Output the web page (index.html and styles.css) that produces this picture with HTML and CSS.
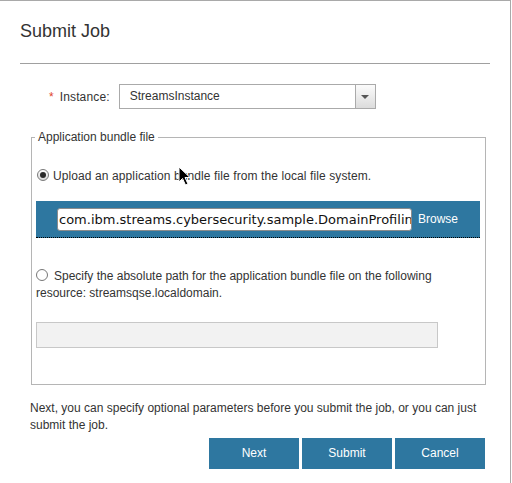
FILE: index.html
```html
<!DOCTYPE html>
<html>
<head>
<meta charset="utf-8">
<link rel="stylesheet" href="styles.css">
</head>
<body>
<div class="dialog">
  <div class="header"><h1 class="title">Submit Job</h1></div>
  <div class="instance-row">
    <span class="req">*</span>
    <span class="lbl">Instance:</span>
    <div class="select">
      <span class="select-text">StreamsInstance</span>
      <span class="select-btn"><span class="tri"></span></span>
    </div>
  </div>
  <fieldset class="bundle">
    <legend>Application bundle file</legend>
    <div class="opt1"><span class="radio checked"></span><span class="opt1-text">Upload an application bundle file from the local file system.</span></div>
    <div class="band">
      <input class="file-input" type="text" readonly value="com.ibm.streams.cybersecurity.sample.DomainProfiling.sab">
      <span class="browse">Browse</span>
    </div>
    <p class="opt2"><span class="radio"></span>Specify the absolute path for the application bundle file on the following resource: streamsqse.localdomain.</p>
    <div class="pathbox"></div>
  </fieldset>
  <p class="note">Next, you can specify optional parameters before you submit the job, or you can just submit the job.</p>
  <div class="buttons">
    <div class="btn">Next</div>
    <div class="btn">Submit</div>
    <div class="btn">Cancel</div>
  </div>
</div>
<svg class="cursor" width="14" height="21" viewBox="0 0 14 21"><path d="M1 1 L1 16 L4.5 12.5 L7.5 19 L10 18 L7 11.5 L12 11.5 Z" fill="#000" stroke="#fff" stroke-width="1"/></svg>
</body>
</html>
```
FILE: styles.css
```css
html, body {
  margin: 0;
  padding: 0;
  background: #fff;
  overflow: hidden;
}
body {
  font-family: "Liberation Sans", Arial, sans-serif;
  font-size: 12px;
  color: #333;
  position: relative;
  width: 512px;
  height: 483px;
}
.dialog {
  width: 510px;
  height: 520px;
  border-top: 1px solid #a9a9a9;
  border-right: 1px solid #a9a9a9;
}
.header {
  margin: 0 20px;
  padding: 19px 0 21px;
  border-bottom: 1px solid #a0a0a0;
}
.title {
  margin: 0;
  font-size: 18px;
  line-height: 22px;
  font-weight: normal;
  color: #333;
}
.instance-row {
  display: flex;
  align-items: center;
  margin: 20px 0 0 49px;
  height: 25px;
}
.req {
  color: #e0442a;
  font-size: 12px;
  line-height: 12px;
  align-self: flex-start;
  margin-top: 7px;
  margin-right: 6px;
}
.lbl {
  margin-right: 9px;
  line-height: 14px;
  letter-spacing: 0.15px;
}
.select {
  box-sizing: border-box;
  width: 257px;
  height: 25px;
  border: 1px solid #aaa;
  display: flex;
  background: #fff;
}
.select-text {
  flex: 1;
  padding-left: 10px;
  line-height: 23px;
}
.select-btn {
  width: 19px;
  border-left: 1px solid #aaa;
  background: linear-gradient(#fbfbfb, #dcdcdc);
  display: flex;
  align-items: center;
  justify-content: center;
}
.tri {
  width: 0;
  height: 0;
  border-left: 4px solid transparent;
  border-right: 4px solid transparent;
  border-top: 4px solid #555;
}
.bundle {
  box-sizing: border-box;
  width: 455px;
  margin: 21px 0 0 31px;
  padding: 0 5px 36px 4px;
  border: 1px solid #b5b5b5;
  min-inline-size: 0;
}
.bundle legend {
  padding: 0 3px;
  margin-left: -1px;
  line-height: 14px;
  font-size: 12px;
  color: #333;
}
.opt1 {
  display: flex;
  align-items: center;
  height: 18px;
  margin-top: 22px;
}
.radio {
  box-sizing: border-box;
  display: inline-block;
  width: 12px;
  height: 12px;
  border-radius: 50%;
  border: 1px solid #8a8a8a;
  background: #fff;
  position: relative;
}
.radio.checked {
  margin-left: 1px;
  background: linear-gradient(#ffffff, #d8d8d8);
  border-color: #7a7a7a;
}
.radio.checked::after {
  content: "";
  position: absolute;
  left: 2px;
  top: 2px;
  width: 6px;
  height: 6px;
  border-radius: 50%;
  background: #2a2a2a;
}
.opt1-text {
  margin-left: 4px;
  font-size: 12px;
  letter-spacing: 0.1px;
  color: #333;
  padding-top: 2px;
}
.band {
  margin-top: 17px;
  height: 36px;
  background: #2e77a0;
  border-bottom: 1px dotted #000;
  display: flex;
  align-items: center;
  padding-left: 21px;
}
.file-input {
  box-sizing: border-box;
  width: 355px;
  height: 23px;
  margin: 0;
  background: #fff;
  border: 1px solid #8c8c8c;
  border-radius: 3px;
  box-shadow: inset 0 0 0 1px #fff;
  font-family: "DejaVu Sans", sans-serif;
  font-size: 13px;
  padding: 0 0 0 1px;
  color: #111;
  outline: none;
}
.browse {
  margin-left: 6px;
  color: #fff;
  font-size: 12px;
}
.opt2 {
  margin: 30px 0 0;
  line-height: 17px;
  font-size: 12px;
}
.opt2 .radio {
  vertical-align: -1px;
  margin-right: 6px;
  border-color: #777;
}
.pathbox {
  box-sizing: border-box;
  margin-top: 20px;
  width: 402px;
  height: 26px;
  background: #f2f2f2;
  border: 1px solid #c8c8c8;
}
.note {
  margin: 15px 0 0 30px;
  width: 458px;
  line-height: 17px;
  font-size: 12px;
}
.buttons {
  width: 485px;
  margin-top: 4px;
  display: flex;
  justify-content: flex-end;
  gap: 3px;
}
.btn {
  width: 90px;
  height: 31px;
  background: #2e77a0;
  color: #fff;
  font-size: 12px;
  line-height: 31px;
  text-align: center;
}
.cursor {
  position: absolute;
  left: 178px;
  top: 166px;
}
```
